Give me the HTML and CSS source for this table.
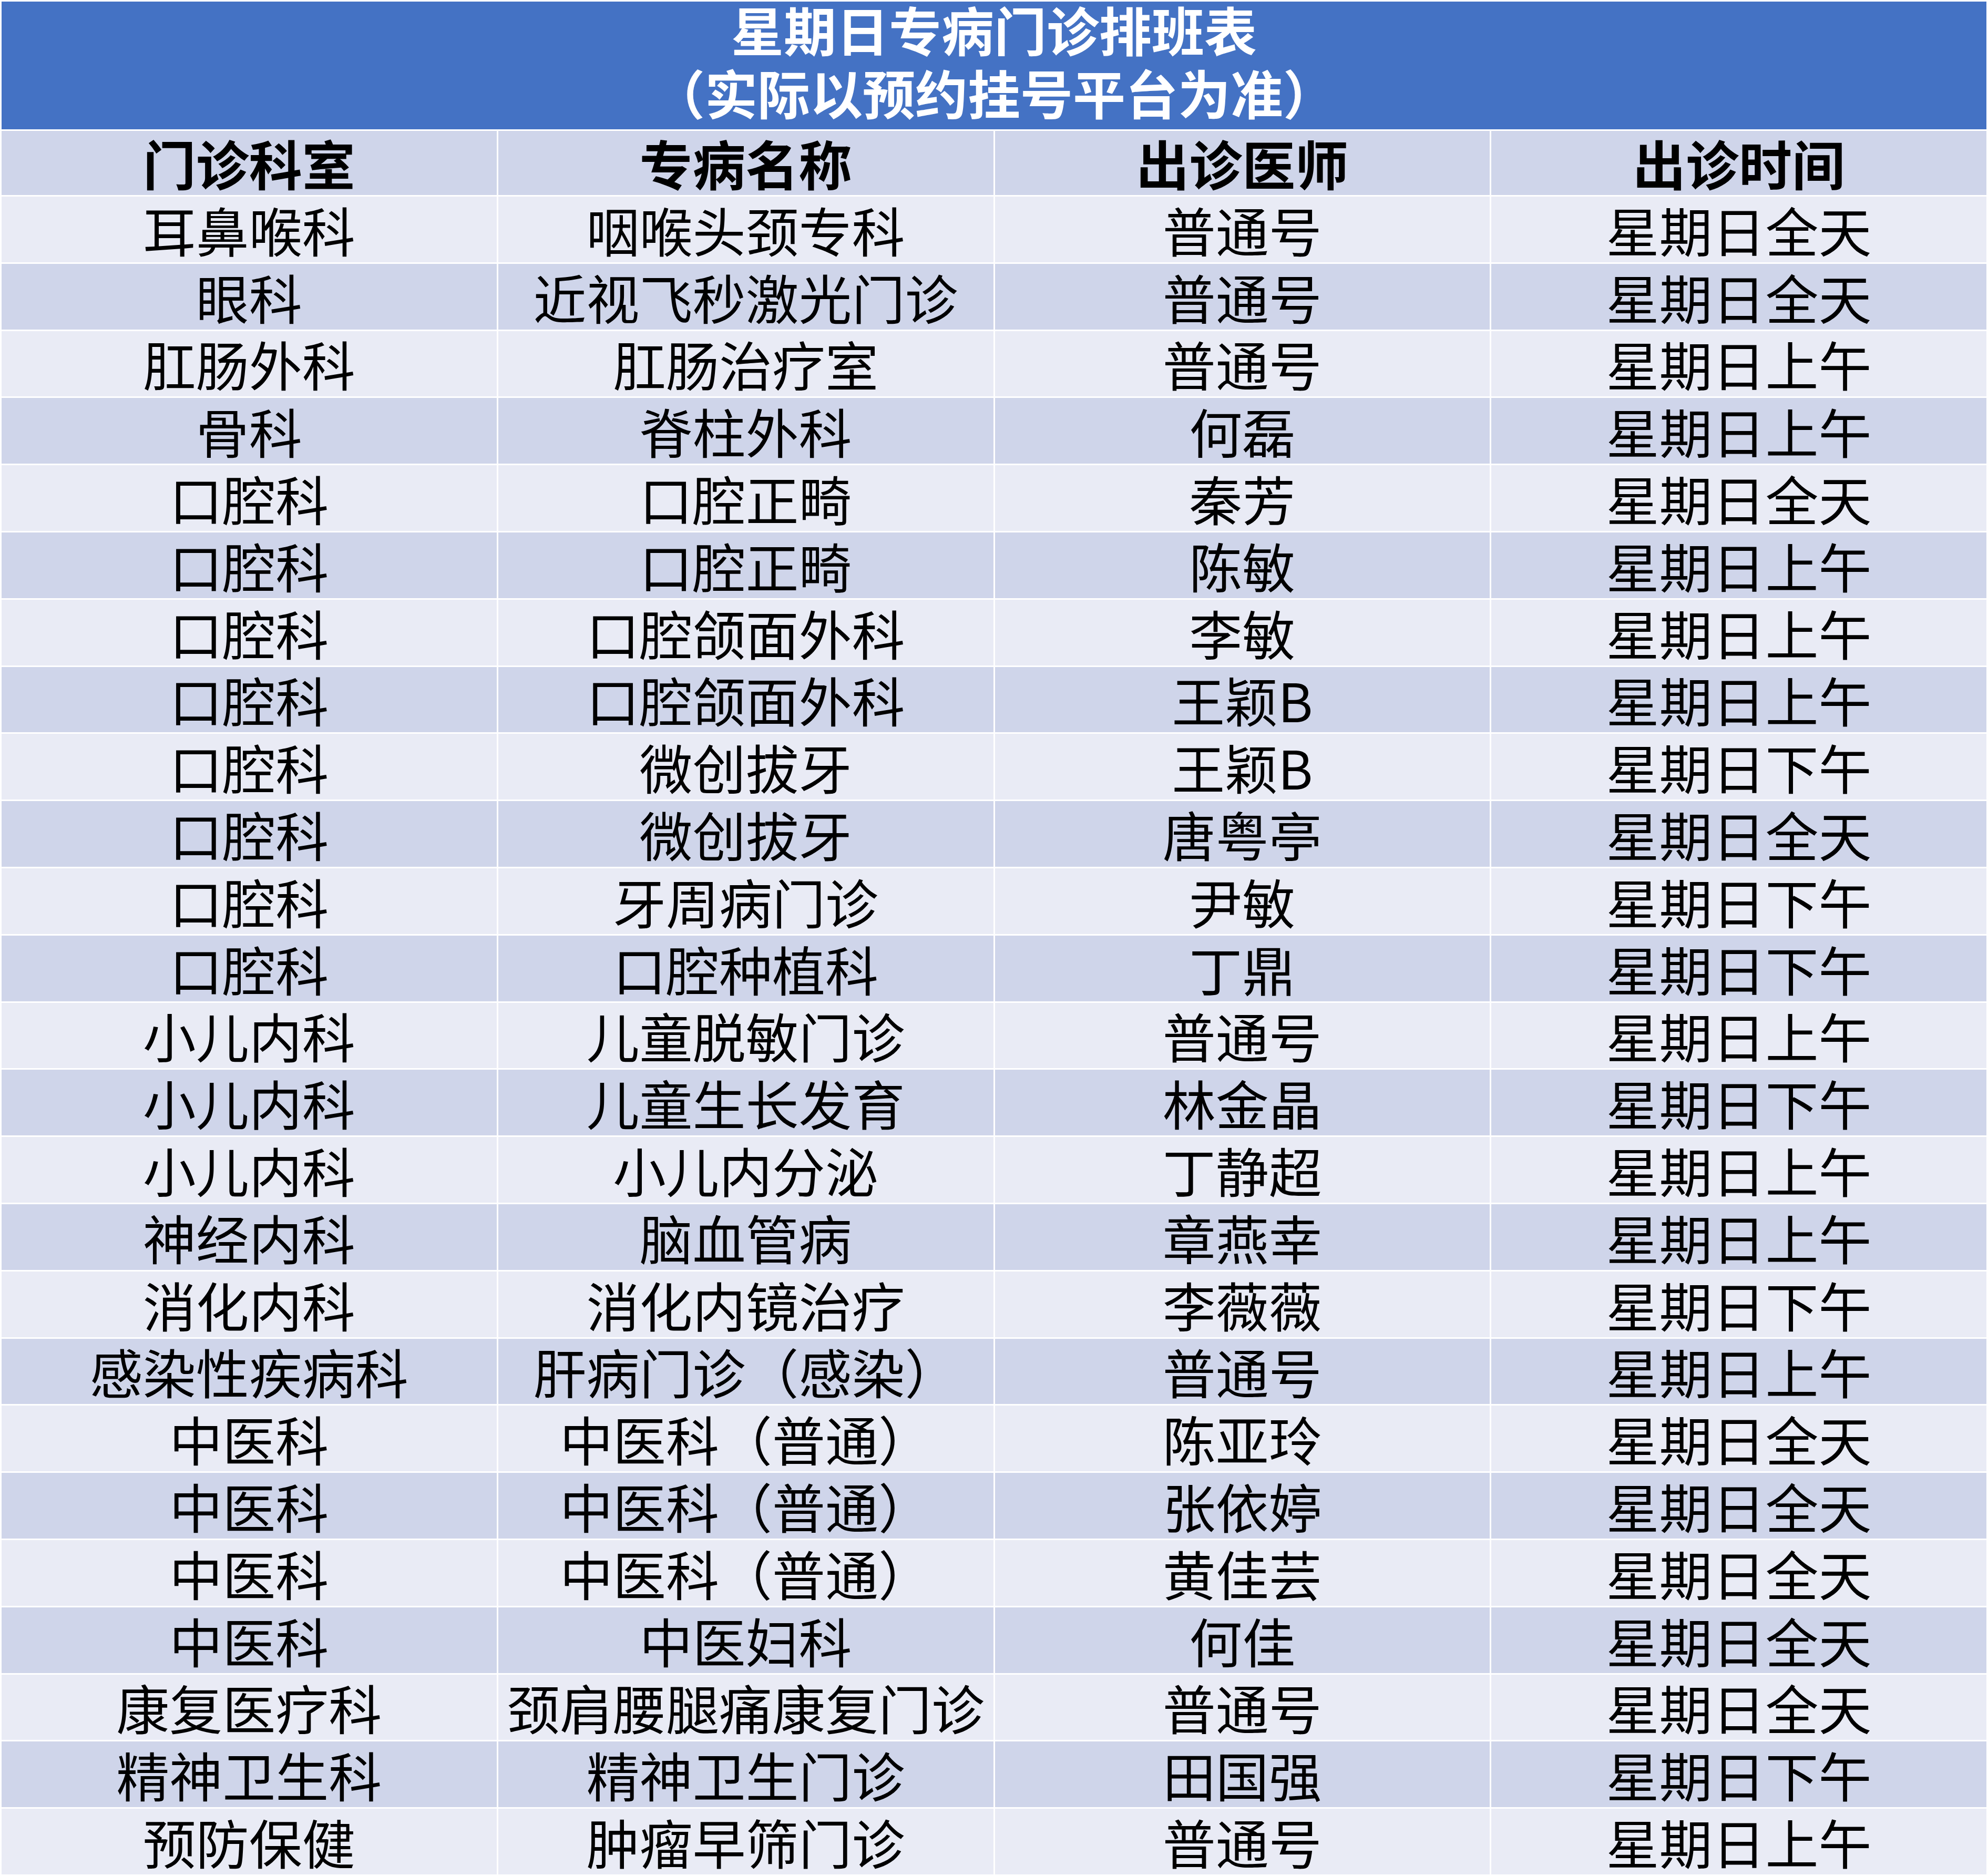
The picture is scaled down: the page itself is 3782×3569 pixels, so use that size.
FILE: index.html
```html
<!DOCTYPE html>
<html lang="zh-CN">
<head>
<meta charset="utf-8">
<title>星期日专病门诊排班表</title>
<link rel="stylesheet" href="styles.css">
</head>
<body>
<table class="schedule">
  <colgroup><col class="c"><col class="c"><col class="c"><col class="c"></colgroup>
  <thead>
    <tr class="title-row"><th colspan="4" class="title"><div class="title-text">星期日专病门诊排班表<br>（实际以预约挂号平台为准）</div></th></tr>
    <tr class="head-row"><th>门诊科室</th><th>专病名称</th><th>出诊医师</th><th>出诊时间</th></tr>
  </thead>
  <tbody>
    <tr><td>耳鼻喉科</td><td>咽喉头颈专科</td><td>普通号</td><td>星期日全天</td></tr>
    <tr><td>眼科</td><td>近视飞秒激光门诊</td><td>普通号</td><td>星期日全天</td></tr>
    <tr><td>肛肠外科</td><td>肛肠治疗室</td><td>普通号</td><td>星期日上午</td></tr>
    <tr><td>骨科</td><td>脊柱外科</td><td>何磊</td><td>星期日上午</td></tr>
    <tr><td>口腔科</td><td>口腔正畸</td><td>秦芳</td><td>星期日全天</td></tr>
    <tr><td>口腔科</td><td>口腔正畸</td><td>陈敏</td><td>星期日上午</td></tr>
    <tr><td>口腔科</td><td>口腔颌面外科</td><td>李敏</td><td>星期日上午</td></tr>
    <tr><td>口腔科</td><td>口腔颌面外科</td><td>王颖B</td><td>星期日上午</td></tr>
    <tr><td>口腔科</td><td>微创拔牙</td><td>王颖B</td><td>星期日下午</td></tr>
    <tr><td>口腔科</td><td>微创拔牙</td><td>唐粤亭</td><td>星期日全天</td></tr>
    <tr><td>口腔科</td><td>牙周病门诊</td><td>尹敏</td><td>星期日下午</td></tr>
    <tr><td>口腔科</td><td>口腔种植科</td><td>丁鼎</td><td>星期日下午</td></tr>
    <tr><td>小儿内科</td><td>儿童脱敏门诊</td><td>普通号</td><td>星期日上午</td></tr>
    <tr><td>小儿内科</td><td>儿童生长发育</td><td>林金晶</td><td>星期日下午</td></tr>
    <tr><td>小儿内科</td><td>小儿内分泌</td><td>丁静超</td><td>星期日上午</td></tr>
    <tr><td>神经内科</td><td>脑血管病</td><td>章燕幸</td><td>星期日上午</td></tr>
    <tr><td>消化内科</td><td>消化内镜治疗</td><td>李薇薇</td><td>星期日下午</td></tr>
    <tr><td>感染性疾病科</td><td>肝病门诊（感染）</td><td>普通号</td><td>星期日上午</td></tr>
    <tr><td>中医科</td><td>中医科（普通）</td><td>陈亚玲</td><td>星期日全天</td></tr>
    <tr><td>中医科</td><td>中医科（普通）</td><td>张依婷</td><td>星期日全天</td></tr>
    <tr><td>中医科</td><td>中医科（普通）</td><td>黄佳芸</td><td>星期日全天</td></tr>
    <tr><td>中医科</td><td>中医妇科</td><td>何佳</td><td>星期日全天</td></tr>
    <tr><td>康复医疗科</td><td>颈肩腰腿痛康复门诊</td><td>普通号</td><td>星期日全天</td></tr>
    <tr><td>精神卫生科</td><td>精神卫生门诊</td><td>田国强</td><td>星期日下午</td></tr>
    <tr><td>预防保健</td><td>肿瘤早筛门诊</td><td>普通号</td><td>星期日上午</td></tr>
  </tbody>
</table>
</body>
</html>
```
FILE: styles.css
```css
html, body {
  margin: 0;
  padding: 0;
  background: #ffffff;
}
body {
  font-family: "Noto Sans CJK SC", "Noto Sans", "Liberation Sans", sans-serif;
  color: #000;
}
.schedule {
  width: 3782px;
  table-layout: fixed;
  border-collapse: separate;
  border-spacing: 3px;
}
.schedule th,
.schedule td {
  padding: 0;
  text-align: center;
  vertical-align: middle;
  font-size: 101px;
  line-height: 1.2;
  white-space: nowrap;
}
.title-row .title {
  background: #4472c4;
  color: #ffffff;
  font-weight: 700;
  font-size: 100px;
  line-height: 120px;
  height: 243px;
  vertical-align: top;
}
.title-text {
  margin-top: -8px;
}
.head-row th {
  background: #cfd5ea;
  font-weight: 700;
  height: 122px;
}
.schedule tbody td {
  height: 124.8px;
  font-weight: 400;
}
.schedule tbody tr:nth-child(odd) td {
  background: #e9ebf5;
}
.schedule tbody tr:nth-child(even) td {
  background: #cfd5ea;
}
```
